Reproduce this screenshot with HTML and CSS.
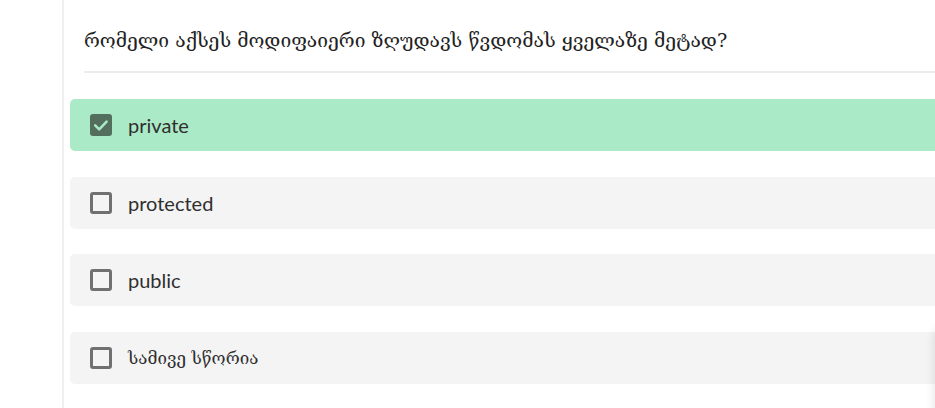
FILE: index.html
```html
<!DOCTYPE html>
<html lang="ka">
<head>
<meta charset="utf-8">
<link rel="stylesheet" href="styles.css">
</head>
<body>
<div class="page">
  <aside class="rail"></aside>
  <main class="main">
    <div class="question">
      <h2 class="qtext">რომელი აქსეს მოდიფაიერი ზღუდავს წვდომას ყველაზე მეტად?</h2>
    </div>
    <ul class="options">
      <li class="option checked">
        <span class="box"><svg viewBox="0 0 22 22" width="22" height="22"><path d="M5.2 11.4l4 4 7.4-7.8" fill="none" stroke="#a9e8c4" stroke-width="2.6" stroke-linecap="round" stroke-linejoin="round"/></svg></span>
        <span class="label">private</span>
      </li>
      <li class="option">
        <span class="box"></span>
        <span class="label">protected</span>
      </li>
      <li class="option">
        <span class="box"></span>
        <span class="label">public</span>
      </li>
      <li class="option">
        <span class="box"></span>
        <span class="label ka">სამივე სწორია</span>
      </li>
    </ul>
  </main>
  <div class="edge-shadow"></div>
</div>
</body>
</html>
```

FILE: styles.css
```css
html, body {
  margin: 0;
  padding: 0;
  background: #fff;
  overflow: hidden;
}
body {
  font-family: "Lato", "DejaVu Sans", sans-serif;
  color: #333;
}
.page {
  display: flex;
  width: 935px;
  height: 408px;
  position: relative;
  overflow: hidden;
}
.rail {
  width: 62px;
  flex: none;
  border-right: 2px solid #f0f0f0;
}
.main {
  flex: 1;
  padding-left: 6px;
  min-width: 0;
}
.question {
  margin-left: 14px;
  padding-top: 24px;
  height: 47px;
  border-bottom: 2px solid #ececec;
}
.qtext {
  margin: 0;
  font-family: "DejaVu Serif", serif;
  font-weight: normal;
  font-size: 19.25px;
  line-height: 34px;
  color: #222;
  white-space: nowrap;
}
.options {
  list-style: none;
  margin: 0;
  padding: 26px 0 0 0;
  display: flex;
  flex-direction: column;
  gap: 25.6px;
}
.option {
  display: flex;
  align-items: center;
  height: 52px;
  margin-right: -20px;
  padding-left: 20px;
  background: #f4f4f4;
  border-radius: 5px;
  font-size: 20px;
}
.option.checked {
  background: #abeac6;
}
.box {
  width: 22px;
  height: 22px;
  box-sizing: border-box;
  border: 3px solid #707070;
  border-radius: 3px;
  margin-right: 16px;
  flex: none;
  display: flex;
  align-items: center;
  justify-content: center;
}
.checked .box {
  border: none;
  background: #536e5d;
}
.label {
  color: #2f2f2f;
}
.label.ka {
  font-family: "DejaVu Serif", serif;
  font-size: 17px;
}
.edge-shadow {
  position: absolute;
  right: -40px;
  top: 330px;
  width: 40px;
  height: 200px;
  box-shadow: 0 0 10px rgba(0,0,0,0.12);
}
```
